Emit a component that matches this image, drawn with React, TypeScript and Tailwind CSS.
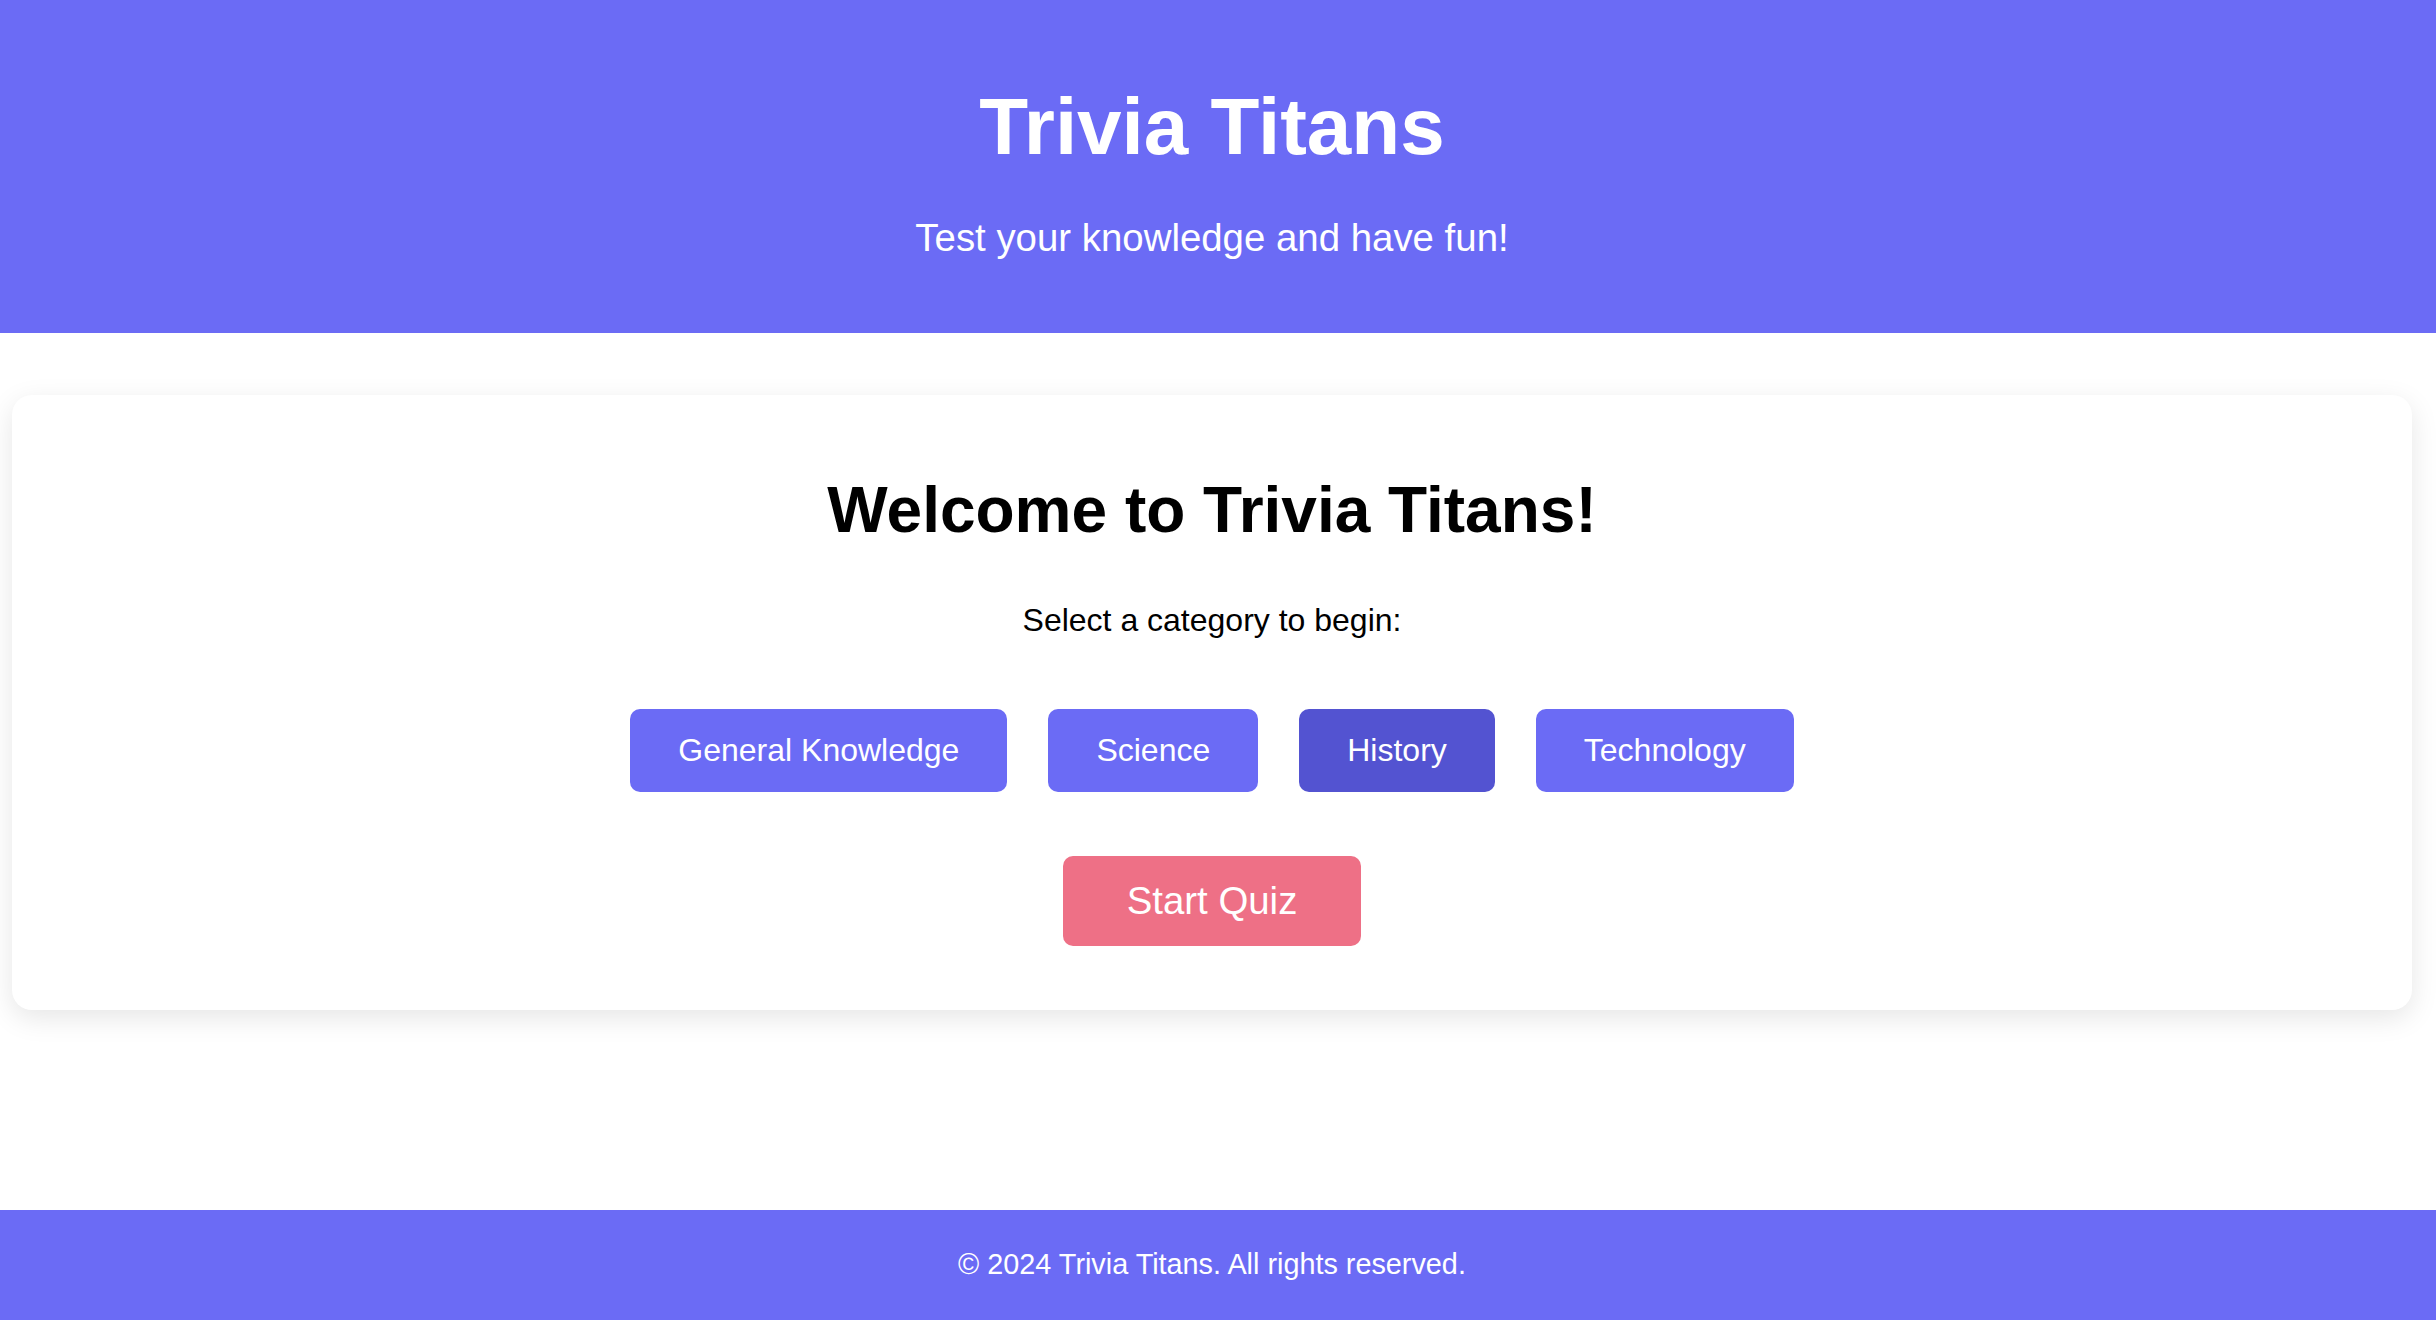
import { useState } from "react";

// Categories shown on the welcome card
const categories = ["General Knowledge", "Science", "History", "Technology"];

const App = () => {
  const [selected, setSelected] = useState<string>("History");

  return (
    <div className="min-h-[1320px] flex flex-col bg-white font-['Liberation_Sans',Arial,Helvetica,sans-serif]">
      {/* Header */}
      <header className="bg-[#6b6bf5] text-white text-center pt-[81px] pb-[73px] pr-[12px]">
        <h1 className="text-[80px] font-bold leading-[1.15]">Trivia Titans</h1>
        <p className="text-[38.4px] leading-[1.15] mt-[43px]">
          Test your knowledge and have fun!
        </p>
      </header>

      {/* Main content */}
      <main className="flex-grow pl-[12px] pr-[24px] pt-[62px]">
        <div className="bg-white rounded-[20px] shadow-[0_8px_28px_rgba(0,0,0,0.1)] text-center pt-[79px] pb-[64px]">
          <h2 className="text-[64px] font-bold leading-[1.15] text-black">
            Welcome to Trivia Titans!
          </h2>
          <p className="text-[32px] leading-[1.15] text-black mt-[54px]">
            Select a category to begin:
          </p>

          {/* Category buttons */}
          <div className="flex justify-center gap-[41px] mt-[70px]">
            {categories.map((cat) => (
              <button
                key={cat}
                onClick={() => setSelected(cat)}
                className={`text-white text-[32px] leading-[1.15] px-[48px] py-[23.4px] rounded-[10px] ${
                  selected === cat ? "bg-[#5353d1]" : "bg-[#6b6bf5]"
                }`}
              >
                {cat}
              </button>
            ))}
          </div>

          <button className="mt-[64px] bg-[#ee7086] text-white text-[38.4px] leading-[1.15] px-[64px] py-[23px] rounded-[10px]">
            Start Quiz
          </button>
        </div>
      </main>

      {/* Footer */}
      <footer className="bg-[#6b6bf5] text-white text-center text-[28.8px] leading-[1.15] py-[38.5px] pr-[12px]">
        © 2024 Trivia Titans. All rights reserved.
      </footer>
    </div>
  );
};

export default App;
